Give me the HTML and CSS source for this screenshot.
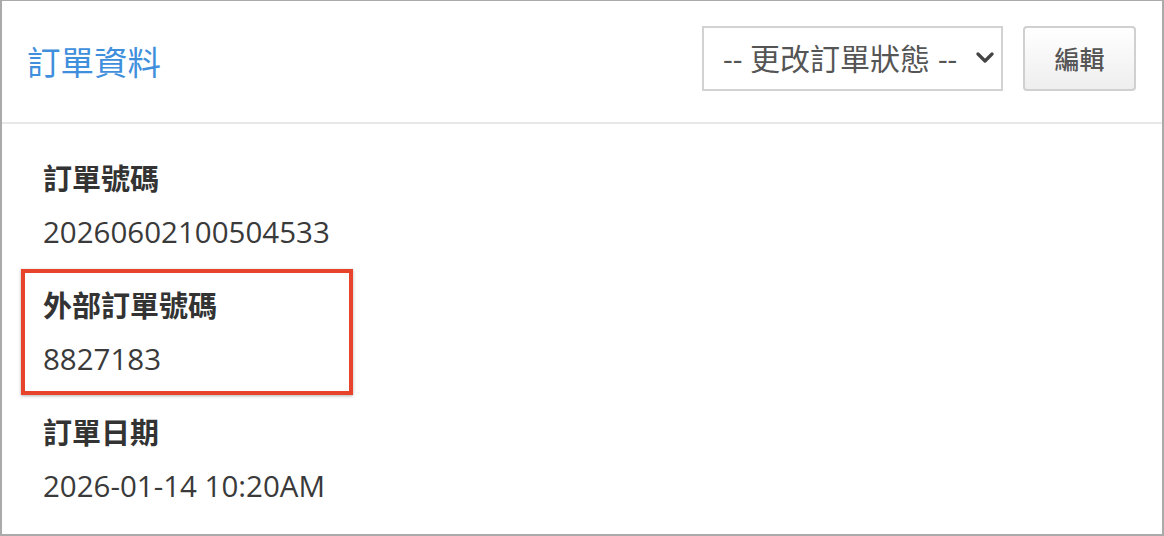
FILE: index.html
```html
<!DOCTYPE html>
<html lang="zh-TW">
<head>
    <meta charset="UTF-8">
    <meta name="viewport" content="width=device-width, initial-scale=1.0">
    <title>訂單資料</title>
    <link rel="stylesheet" href="styles.css">
</head>
<body>
    <div class="panel">
        <div class="panel-header">
            <h2 class="panel-title">訂單資料</h2>
            <div class="actions">
                <span class="select-wrap">
                    <select class="status-select">
                        <option>-- 更改訂單狀態 --</option>
                    </select>
                    <svg class="chevron" width="18" height="12" viewBox="0 0 18 12">
                        <path d="M2 2 L9 9 L16 2" fill="none" stroke="#444" stroke-width="3.2" stroke-linecap="round" stroke-linejoin="round"/>
                    </svg>
                </span>
                <button class="btn">編輯</button>
            </div>
        </div>
        <div class="panel-body">
            <div class="field">
                <div class="field-label">訂單號碼</div>
                <div class="field-value">20260602100504533</div>
            </div>
            <div class="field highlight">
                <div class="field-label">外部訂單號碼</div>
                <div class="field-value">8827183</div>
            </div>
            <div class="field">
                <div class="field-label">訂單日期</div>
                <div class="field-value">2026-01-14 10:20AM</div>
            </div>
        </div>
    </div>
</body>
</html>
```

FILE: styles.css
```css
* {
    box-sizing: border-box;
}
body {
    margin: 0;
    font-family: "Open Sans", "Noto Sans CJK TC", sans-serif;
    color: #333;
    background: #fff;
}
.panel {
    width: 1164px;
    height: 536px;
    border: 2px solid #aaa;
    border-top-width: 1px;
    background: #fff;
}
.panel-header {
    display: flex;
    align-items: center;
    justify-content: space-between;
    height: 123px;
    padding: 0 26px 0 25px;
    border-bottom: 2px solid #e8e8e8;
}
.panel-title {
    margin: 0;
    font-size: 33.5px;
    font-weight: normal;
    line-height: 40px;
    color: #3f8fdc;
}
.actions {
    display: flex;
    gap: 20px;
    margin-bottom: 7px;
}
.select-wrap {
    position: relative;
    display: block;
}
.status-select {
    appearance: none;
    -webkit-appearance: none;
    display: block;
    width: 301px;
    height: 65px;
    padding: 0 0 0 19px;
    border: 2px solid #d2d2d2;
    border-radius: 0;
    background: #fff;
    font-family: "Open Sans", "Noto Sans CJK TC", sans-serif;
    font-size: 30px;
    color: #555;
}
.chevron {
    position: absolute;
    right: 9px;
    top: 26px;
    pointer-events: none;
}
.btn {
    width: 113px;
    height: 65px;
    border: 2px solid #d0d0d0;
    border-radius: 4px;
    background: linear-gradient(#ffffff, #eeeeee);
    font-family: "Open Sans", "Noto Sans CJK TC", sans-serif;
    font-size: 25px;
    font-weight: 500;
    color: #555;
    cursor: pointer;
}
.panel-body {
    padding: 28px 0 0 41px;
}
.field {
    position: relative;
    margin-bottom: 21px;
}
.field-label,
.field-value {
    font-size: 29px;
    line-height: 53px;
}
.field-label {
    font-weight: bold;
    color: #333;
}
.field-value {
    font-size: 29.5px;
    color: #3a3a3a;
}
.highlight::after {
    content: "";
    position: absolute;
    left: -22px;
    top: -10px;
    bottom: -10px;
    width: 332px;
    box-sizing: border-box;
    border: 4px solid #e8432b;
    box-shadow: 0 1px 3px rgba(0, 0, 0, 0.3);
}
```
